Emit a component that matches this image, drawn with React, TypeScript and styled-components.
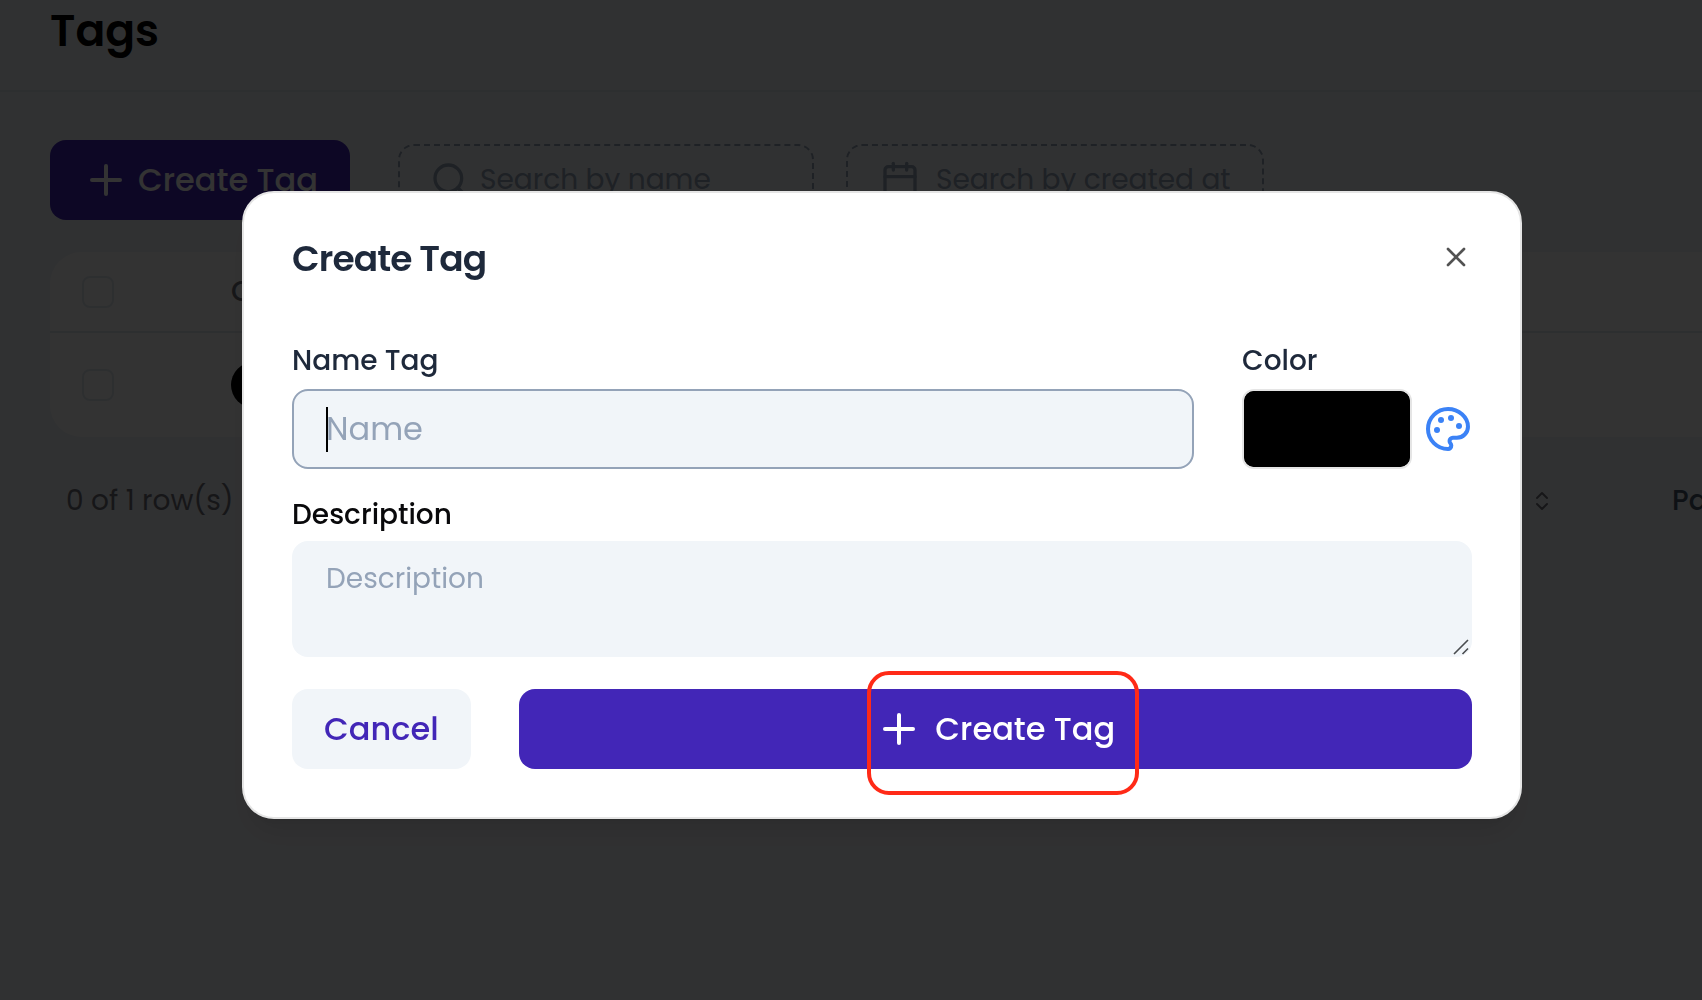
import React from "react";
import styled, { createGlobalStyle } from "styled-components";
import { Calendar, ChevronsUpDown, Plus, Search, X } from "lucide-react";

const GlobalStyle = createGlobalStyle`
  *, *::before, *::after { box-sizing: border-box; }
  html, body, #root { height: 100%; }
  body { margin: 0; overflow: hidden; background: #f1f5f9; color: #09090b; }
  body, button, input, textarea {
    font-family: Poppins, Inter, "Liberation Sans", sans-serif;
  }
`;

const Page = styled.div`
  min-height: 100%;
`;

const Header = styled.header`
  display: flex;
  align-items: flex-start;
  height: 92px;
  padding: 0 50px;
  border-bottom: 2px solid #e2e8f0;
`;

const PageTitle = styled.h1`
  margin: 0;
  font-size: 44px;
  line-height: 62px;
  font-weight: 600;
  color: #000;
`;

const Toolbar = styled.div`
  display: flex;
  align-items: center;
  padding: 48px 50px 32px;
`;

const Button = styled.button<{ $variant?: "primary" | "soft"; $grow?: boolean }>`
  display: inline-flex;
  align-items: center;
  justify-content: center;
  flex: ${(p) => (p.$grow ? "1" : "none")};
  gap: 8px;
  height: 80px;
  padding: 0 32px;
  border: 0;
  border-radius: 16px;
  font-size: 32px;
  line-height: 40px;
  font-weight: 500;
  white-space: nowrap;
  background: ${(p) => (p.$variant === "soft" ? "#f1f5f9" : "#4226b7")};
  color: ${(p) => (p.$variant === "soft" ? "#4226b7" : "#fff")};
`;

const ToolbarButton = styled(Button)`
  width: 300px;
  margin-right: 48px;
`;

const SearchField = styled.label<{ $gap: number; $pad: number; $width: number }>`
  display: flex;
  align-items: center;
  gap: ${(p) => p.$gap}px;
  width: ${(p) => p.$width}px;
  height: 72px;
  margin-right: 32px;
  padding: 0 ${(p) => p.$pad}px;
  border: 2px dashed #94a3b8;
  border-radius: 16px;
  color: #94a3b8;
`;

const SearchInput = styled.input`
  flex: 1;
  min-width: 0;
  padding: 0;
  border: 0;
  outline: 0;
  background: transparent;
  font-size: 28px;
  line-height: 40px;
  &::placeholder { color: #94a3b8; opacity: 1; }
`;

const TableCard = styled.div`
  margin-left: 50px;
  border-radius: 32px 0 0 32px;
  background: #fff;
  overflow: hidden;
`;

const Table = styled.table`
  width: 100%;
  border-collapse: separate;
  border-spacing: 0;
  font-size: 28px;
  line-height: 40px;
  text-align: left;
`;

const Row = styled.tr<{ $height: number; $line?: boolean }>`
  height: ${(p) => p.$height}px;
  & > * { border-bottom: ${(p) => (p.$line ? "2px solid #e2e8f0" : "0")}; }
`;

const HeadCell = styled.th`
  padding: 0;
  font-weight: 500;
  color: #71717a;
`;

const Cell = styled.td`
  padding: 0;
`;

const CheckCell = styled(Cell)`
  width: 181px;
  padding-left: 32px;
`;

const Checkbox = styled.input`
  appearance: none;
  display: block;
  width: 32px;
  height: 32px;
  margin: 0;
  border: 2px solid #e2e8f0;
  border-radius: 8px;
`;

const Dot = styled.span`
  display: block;
  width: 46px;
  height: 46px;
  border-radius: 50%;
  background: #000;
`;

const Footer = styled.footer`
  display: flex;
  align-items: center;
  padding: 44px 0 0 66px;
  font-size: 28px;
  line-height: 40px;
  white-space: nowrap;
`;

const Selected = styled.span`
  flex: 1;
  color: #71717a;
`;

const PageSize = styled.button`
  display: flex;
  margin: 0 118px 0 0;
  padding: 0;
  border: 0;
  background: transparent;
  color: #71717a;
`;

const PageCount = styled.span`
  width: 30px;
  font-weight: 500;
  color: #475569;
`;

const Overlay = styled.div`
  position: fixed;
  inset: 0;
  display: flex;
  align-items: center;
  justify-content: center;
  padding: 10px 0 0 62px;
  background: rgba(0, 0, 0, 0.8);
`;

const Dialog = styled.form`
  width: 1280px;
  max-width: 90vw;
  padding: 48px;
  border: 2px solid #e5e5e5;
  border-radius: 32px;
  background: #fff;
  box-shadow: 0 20px 30px -6px rgba(0, 0, 0, 0.1), 0 8px 12px -8px rgba(0, 0, 0, 0.1);
`;

const DialogHeader = styled.div`
  display: flex;
  justify-content: space-between;
  align-items: flex-start;
  height: 88px;
  margin-bottom: 18px;
`;

const DialogTitle = styled.h2`
  margin: 0;
  font-size: 36px;
  line-height: 36px;
  font-weight: 600;
  letter-spacing: -0.025em;
  color: #1e293b;
`;

const CloseButton = styled.button`
  display: flex;
  padding: 0;
  border: 0;
  background: transparent;
  color: #525252;
`;

const Fields = styled.div`
  display: flex;
  gap: 48px;
  margin-bottom: 32px;
`;

const Field = styled.div<{ $width?: number; $gap?: number }>`
  display: flex;
  flex-direction: column;
  flex: ${(p) => (p.$width ? `0 0 ${p.$width}px` : "1")};
  gap: ${(p) => p.$gap ?? 14}px;
`;

const Label = styled.label<{ $dark?: boolean }>`
  font-size: 28px;
  line-height: 28px;
  font-weight: 500;
  color: ${(p) => (p.$dark ? "#09090b" : "#1e293b")};
`;

const NameBox = styled.div`
  display: flex;
  align-items: center;
  height: 80px;
  padding: 0 32px;
  border: 2px solid #94a3b8;
  border-radius: 16px;
  background: #f1f5f9;
`;

const Caret = styled.span`
  width: 2px;
  height: 45px;
  margin-right: -2px;
  background: #000;
`;

const NameInput = styled(SearchInput)`
  font-size: 32px;
`;

const ColorRow = styled.div`
  display: flex;
  align-items: center;
  gap: 12px;
`;

const Swatch = styled.input`
  appearance: none;
  flex: 1;
  min-width: 0;
  height: 80px;
  padding: 0;
  border: 2px solid #e5e5e5;
  border-radius: 12px;
  background: #000;
  &::-webkit-color-swatch-wrapper { padding: 0; }
  &::-webkit-color-swatch { border: 0; border-radius: 10px; }
`;

const DescriptionBox = styled.div`
  position: relative;
`;

const Description = styled.textarea`
  display: block;
  width: 100%;
  height: 116px;
  padding: 18px 34px;
  border: 0;
  border-radius: 16px;
  outline: 0;
  background: #f1f5f9;
  font-size: 28px;
  line-height: 40px;
  resize: none;
  &::placeholder { color: #94a3b8; opacity: 1; }
`;

const Grip = styled.svg`
  position: absolute;
  right: 3px;
  bottom: 2px;
  pointer-events: none;
`;

const Actions = styled.div`
  display: flex;
  gap: 48px;
  margin-top: 32px;
`;

const Highlighted = styled.span`
  position: relative;
  display: inline-flex;
  align-items: center;
  gap: 12px;
  &::after {
    content: "";
    position: absolute;
    inset: -34px -24px -42px -8px;
    border: 4px solid #ff2a17;
    border-radius: 22px;
  }
`;

function PaletteIcon() {
  return (
    <svg width="48" height="48" viewBox="0 0 24 24" fill="none" aria-hidden="true">
      <g fill="#3b82f6">
        <circle cx="13.5" cy="6.5" r="1.5" />
        <circle cx="17.5" cy="10.5" r="1.5" />
        <circle cx="8.5" cy="7.5" r="1.5" />
        <circle cx="6.5" cy="12.5" r="1.5" />
      </g>
      <path
        stroke="#3b82f6"
        strokeWidth="2"
        strokeLinecap="round"
        strokeLinejoin="round"
        d="M12 2C6.5 2 2 6.5 2 12s4.5 10 10 10c.926 0 1.648-.746 1.648-1.688 0-.437-.18-.835-.437-1.125-.29-.289-.438-.652-.438-1.125a1.64 1.64 0 0 1 1.668-1.668h1.996c3.051 0 5.555-2.503 5.555-5.554C21.965 6.012 17.461 2 12 2z"
      />
    </svg>
  );
}

export default function App() {
  return (
    <>
      <GlobalStyle />
      <Page>
        <Header>
          <PageTitle>Tags</PageTitle>
        </Header>
        <Toolbar>
          <ToolbarButton type="button">
            <Plus size={48} />
            Create Tag
          </ToolbarButton>
          <SearchField $gap={10} $pad={30} $width={416}>
            <Search size={40} />
            <SearchInput placeholder="Search by name" aria-label="Search by name" />
          </SearchField>
          <SearchField $gap={16} $pad={32} $width={418}>
            <Calendar size={40} />
            <SearchInput placeholder="Search by created at" aria-label="Search by created at" />
          </SearchField>
        </Toolbar>
        <TableCard>
          <Table>
            <thead>
              <Row $height={81} $line>
                <CheckCell><Checkbox type="checkbox" aria-label="Select all" /></CheckCell>
                <HeadCell>Color</HeadCell>
              </Row>
            </thead>
            <tbody>
              <Row $height={104}>
                <CheckCell><Checkbox type="checkbox" aria-label="Select row" /></CheckCell>
                <Cell><Dot /></Cell>
              </Row>
            </tbody>
          </Table>
        </TableCard>
        <Footer>
          <Selected>0 of 1 row(s)</Selected>
          <PageSize type="button" aria-label="Rows per page"><ChevronsUpDown size={24} /></PageSize>
          <PageCount>Page</PageCount>
        </Footer>
      </Page>
      <Overlay>
        <Dialog role="dialog" aria-labelledby="dialog-title" onSubmit={(e) => e.preventDefault()}>
          <DialogHeader>
            <DialogTitle id="dialog-title">Create Tag</DialogTitle>
            <CloseButton type="button" aria-label="Close"><X size={32} /></CloseButton>
          </DialogHeader>
          <Fields>
            <Field>
              <Label htmlFor="name">Name Tag</Label>
              <NameBox>
                <Caret />
                <NameInput id="name" placeholder="Name" />
              </NameBox>
            </Field>
            <Field $width={230}>
              <Label htmlFor="color">Color</Label>
              <ColorRow>
                <Swatch id="color" type="color" defaultValue="#000000" />
                <PaletteIcon />
              </ColorRow>
            </Field>
          </Fields>
          <Field $gap={12}>
            <Label htmlFor="description" $dark>Description</Label>
            <DescriptionBox>
              <Description id="description" placeholder="Description" />
              <Grip width="16" height="16" viewBox="0 0 16 16" stroke="#4a4d50" strokeWidth="1.6" aria-hidden="true">
                <path d="M1 15L15 1M9.500 15L15 9.500" />
              </Grip>
            </DescriptionBox>
          </Field>
          <Actions>
            <Button type="button" $variant="soft">Cancel</Button>
            <Button type="submit" $grow>
              <Highlighted>
                <Plus size={48} />
                Create Tag
              </Highlighted>
            </Button>
          </Actions>
        </Dialog>
      </Overlay>
    </>
  );
}
